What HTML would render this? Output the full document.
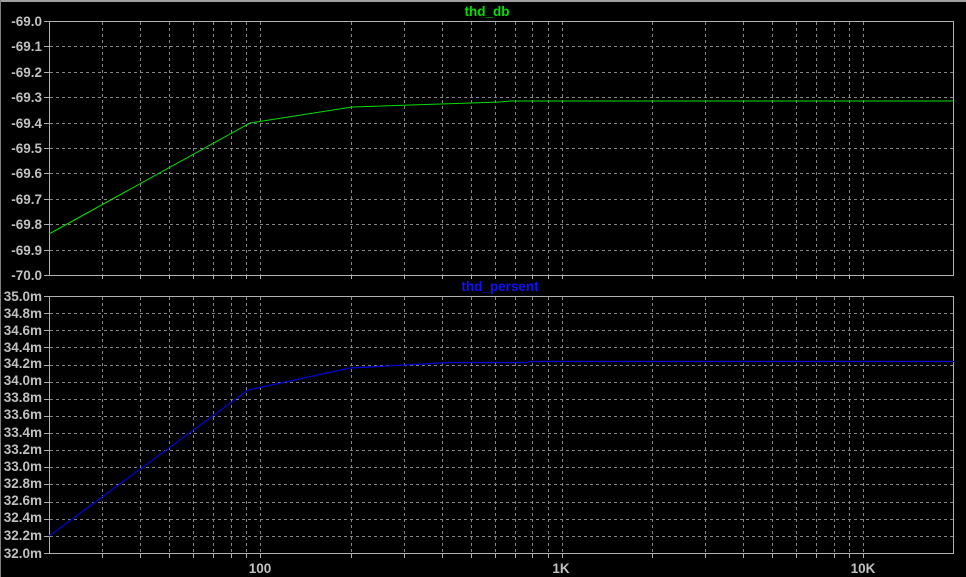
<!DOCTYPE html>
<html><head><meta charset="utf-8"><style>
html,body{margin:0;padding:0;background:#000;}
svg{display:block}
text{font-family:"Liberation Sans",Arial,sans-serif;font-weight:bold;font-size:13.5px;fill:#c0c0c0}
</style></head><body>
<svg id="s" width="966" height="577" viewBox="0 0 966 577" xmlns="http://www.w3.org/2000/svg">
<rect width="966" height="577" fill="#000"/>
<rect x="0" y="0" width="966" height="2" fill="#a0a0a0"/>
<rect x="0" y="0" width="1" height="577" fill="#808080"/>
<g id="grid"></g>
<rect x="49.5" y="21.5" width="904" height="254" fill="none" stroke="#b0b0b0" stroke-width="1"/>
<rect x="49.5" y="296.5" width="904" height="257" fill="none" stroke="#b0b0b0" stroke-width="1"/>
<text x="487" y="16" text-anchor="middle" style="fill:#00e000">thd_db</text>
<text x="500" y="291" text-anchor="middle" style="fill:#1010ff">thd_persent</text>
<g text-anchor="end">
<text x="42" y="26">-69.0</text><text x="42" y="51">-69.1</text><text x="42" y="77">-69.2</text><text x="42" y="102">-69.3</text><text x="42" y="128">-69.4</text><text x="42" y="153">-69.5</text><text x="42" y="178">-69.6</text><text x="42" y="204">-69.7</text><text x="42" y="229">-69.8</text><text x="42" y="255">-69.9</text><text x="42" y="280">-70.0</text>
<text x="42" y="301">35.0m</text><text x="42" y="318">34.8m</text><text x="42" y="335">34.6m</text><text x="42" y="352">34.4m</text><text x="42" y="368">34.2m</text><text x="42" y="385">34.0m</text><text x="42" y="402">33.8m</text><text x="42" y="419">33.6m</text><text x="42" y="437">33.4m</text><text x="42" y="454">33.2m</text><text x="42" y="471">33.0m</text><text x="42" y="488">32.8m</text><text x="42" y="505">32.6m</text><text x="42" y="522">32.4m</text><text x="42" y="540">32.2m</text><text x="42" y="558">32.0m</text>
</g>
<g text-anchor="middle">
<text x="260" y="573">100</text><text x="561" y="573">1K</text><text x="863" y="573">10K</text>
</g>
<polyline points="49,234 250,123 352,107 500,102 510,101 954,101" fill="none" stroke="#00e000" stroke-width="1"/>
<polyline points="49,536 248,390 350,368 450,362.5 527,362.5 530,361.5 954,361.5" fill="none" stroke="#0000e0" stroke-width="1.2"/>
</svg>
<script>
var g=document.getElementById('grid'),h='';
function X(f){return 260+(Math.log10(f)-2)*301.5;}
var xs=[];
for(var d=1;d<=4;d++)for(var k=1;k<10;k++){var f=k*Math.pow(10,d);if(f>20&&f<20000)xs.push(Math.round(X(f))+0.5);}
var D='stroke="#858585" stroke-dasharray="3,3" stroke-width="1"';
xs.forEach(function(x){
 h+='<line x1="'+x+'" y1="22" x2="'+x+'" y2="275" '+D+'/>';
 h+='<line x1="'+x+'" y1="297" x2="'+x+'" y2="553" '+D+'/>';
 h+='<line x1="'+x+'" y1="553" x2="'+x+'" y2="558" stroke="#b0b0b0"/>';
 h+='<line x1="'+x+'" y1="275" x2="'+x+'" y2="279" stroke="#b0b0b0"/>';
});
for(var i=0;i<=10;i++){var y=Math.round(21+i*25.4)+0.5;
 if(i>0&&i<10)h+='<line x1="50" y1="'+y+'" x2="953" y2="'+y+'" '+D+'/>';
 h+='<line x1="44" y1="'+y+'" x2="49" y2="'+y+'" stroke="#b0b0b0"/>';}
for(var i=0;i<=15;i++){var y=Math.round(296+i*257/15)+0.5;
 if(i>0&&i<15)h+='<line x1="50" y1="'+y+'" x2="953" y2="'+y+'" '+D+'/>';
 h+='<line x1="44" y1="'+y+'" x2="49" y2="'+y+'" stroke="#b0b0b0"/>';}
g.innerHTML=h;
</script>
</body></html>
